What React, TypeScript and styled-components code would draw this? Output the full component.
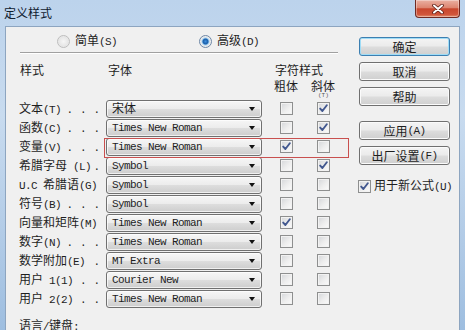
import { Fragment } from "react";
import { createGlobalStyle, styled } from "styled-components";

const GlobalStyle = createGlobalStyle`
  body {
    margin: 0;
    background: #fff;
  }
`;

// Windows 7 "定义样式" dialog: SimSun-like look, Latin in a mono face, CJK at 12px
const Window = styled.div`
  width: 465px;
  height: 330px;
  overflow: hidden;
  display: flex;
  flex-direction: column;
  background: linear-gradient(180deg, #bcd3ec 0%, #c8dbef 35%, #b3cce7 70%, #9ebee0 100%);
  font-family: "Liberation Mono", "Noto Sans CJK SC", monospace;
  font-size: 11px;
  letter-spacing: -0.6px;
  line-height: 14px;
  color: #1e1e1e;
`;

const Han = styled.span`
  font-family: "Noto Sans CJK SC", sans-serif;
  font-size: 12px;
  letter-spacing: 0;
`;

function Txt({ children }: { children: string }) {
  const parts = children.split(/([\u3400-\u9fff\uff00-\uffef]+)/);
  return (
    <>
      {parts.map((p, i) =>
        i % 2 ? <Han key={i}>{p}</Han> : <Fragment key={i}>{p}</Fragment>,
      )}
    </>
  );
}

const TitleBar = styled.div`
  flex-shrink: 0;
  height: 26px;
  display: flex;
  justify-content: space-between;
  align-items: flex-start;
  padding: 0 5px 0 4px;
`;

const Title = styled.div`
  margin-top: 6px;
  font-family: "Noto Sans CJK SC", sans-serif;
  font-size: 12px;
  letter-spacing: 0;
  line-height: 14px;
  color: #10202f;
`;

const CloseButton = styled.div`
  width: 43px;
  height: 17px;
  border: 1px solid #6f2a22;
  border-top: none;
  border-radius: 0 0 4px 4px;
  background: linear-gradient(
    180deg,
    #eab0a2 0%,
    #dd8570 45%,
    #c8462d 52%,
    #d0553a 85%,
    #e28f70 100%
  );
  box-shadow: inset 0 0 0 1px rgba(255, 255, 255, 0.35);
  display: flex;
  align-items: center;
  justify-content: center;
`;

const Body = styled.div`
  flex: 1 0 auto;
  margin: 0 5px;
  background: #f0f0f0;
  border: 1px solid #8da5c0;
  border-bottom: none;
  display: grid;
  grid-template-columns: 353px 91px;
  align-items: start;
`;

const LeftPanel = styled.div`
  padding: 6px 0 0 13px;
`;

const RadioRow = styled.div`
  height: 16px;
  display: flex;
  align-items: center;
  gap: 82px;
  padding-left: 38px;
`;

const RadioItem = styled.label`
  display: flex;
  align-items: center;
  gap: 5px;
`;

const Radio = styled.span<{ $checked?: boolean }>`
  width: 11px;
  height: 11px;
  border-radius: 50%;
  border: 1px solid ${(p) => (p.$checked ? "#6d87a6" : "#bdbdbd")};
  background: ${(p) =>
    p.$checked
      ? "radial-gradient(circle, #3c8ddc 0, #1a5ea8 2.5px, #9fd0f5 3.5px, #eaeaea 4.5px, #fafafa 100%)"
      : "radial-gradient(circle, #f6f6f6 0, #e6e6e6 60%, #f8f8f8 100%)"};
`;

const Separator = styled.div`
  margin: 3px 0 0 1px;
  width: 318px;
  height: 1px;
  background: #a0a0a0;
  border-bottom: 1px solid #fff;
`;

const Table = styled.div`
  position: relative;
  margin-top: 8px;
  display: grid;
  grid-template-columns: 87px 168px 37px 37px;
  grid-template-rows: 17px 20px;
  grid-auto-rows: 19px;
  align-items: center;
`;

const HeadCell = styled.div<{ $span?: number; $pad?: number }>`
  grid-column: span ${(p) => p.$span ?? 1};
  padding-left: ${(p) => p.$pad ?? 1}px;
  align-self: center;
`;

const SubHead = styled.div`
  align-self: start;
  display: flex;
  flex-direction: column;
  align-items: flex-start;
  line-height: 14px;
`;

const Tiny = styled.span`
  font-size: 6px;
  letter-spacing: 0;
  line-height: 5px;
  margin-left: 7px;
  color: #555;
`;

const LabelCell = styled.div`
  display: flex;
  align-items: baseline;
  justify-content: space-between;
  padding-right: 6px;
  white-space: pre;
`;

const Dots = styled.span`
  letter-spacing: 0.15px;
  margin-right: -0.15px;
`;

const Combo = styled.div`
  width: 156px;
  height: 18px;
  box-sizing: border-box;
  border: 1px solid #707070;
  border-radius: 3px;
  background: linear-gradient(180deg, #f6f6f6 0%, #ececec 48%, #dddddd 52%, #cdcdcd 100%);
  box-shadow: inset 0 0 0 1px rgba(255, 255, 255, 0.7);
  display: flex;
  align-items: center;
  justify-content: space-between;
  padding: 0 6px 0 5px;
  white-space: pre;
`;

const Arrow = styled.span`
  width: 0;
  height: 0;
  border-left: 3.5px solid transparent;
  border-right: 3.5px solid transparent;
  border-top: 4px solid #111;
  margin-top: 1px;
`;

const Box = styled.span`
  flex-shrink: 0;
  width: 13px;
  height: 13px;
  box-sizing: border-box;
  border: 1px solid #8e8f8f;
  background: linear-gradient(135deg, #d4d6d9 0%, #eeeeee 55%, #fbfbfb 100%);
  box-shadow: inset 0 0 0 1px #f2f2f2;
  display: inline-flex;
  align-items: center;
  justify-content: center;
`;

const CheckCell = styled.div`
  margin-left: 6px;
  display: flex;
`;

const Highlight = styled.div`
  position: absolute;
  left: 85px;
  top: 76px;
  width: 243px;
  height: 18px;
  border: 1px solid #c9504f;
  pointer-events: none;
`;

const Footer = styled.div`
  margin-top: 10px;
`;

const RightPanel = styled.div`
  padding-top: 10px;
  display: flex;
  flex-direction: column;
  gap: 6px;
`;

const Button = styled.div<{ $default?: boolean; $spaced?: boolean }>`
  height: 19px;
  box-sizing: border-box;
  margin-top: ${(p) => (p.$spaced ? "9px" : "0")};
  border: 1px solid ${(p) => (p.$default ? "#3c7fb1" : "#707070")};
  border-radius: 3px;
  background: linear-gradient(180deg, #f4f4f4 0%, #ebebeb 48%, #dddddd 52%, #cfcfcf 100%);
  box-shadow: inset 0 0 0 1px ${(p) => (p.$default ? "#9fdcf6" : "#fbfbfb")};
  display: flex;
  align-items: center;
  justify-content: center;
  line-height: 14px;
`;

const CheckRow = styled.div`
  margin-top: 7px;
  margin-left: -1px;
  display: flex;
  align-items: center;
  gap: 3px;
  white-space: nowrap;
`;

function Check({ checked }: { checked?: boolean }) {
  return (
    <Box>
      {checked && (
        <svg width="9" height="9" viewBox="0 0 9 9">
          <path
            d="M1.2 4.6 L3.4 7 L7.8 1.2"
            fill="none"
            stroke="#42588f"
            strokeWidth="1.9"
            strokeLinecap="round"
            strokeLinejoin="round"
          />
        </svg>
      )}
    </Box>
  );
}

type Row = {
  label: string;
  dots: string;
  font: string;
  bold?: boolean;
  italic?: boolean;
};

const rows: Row[] = [
  { label: "文本(T)", dots: ". . .", font: "宋体", italic: true },
  { label: "函数(C)", dots: ". . .", font: "Times New Roman", italic: true },
  { label: "变量(V)", dots: ". . .", font: "Times New Roman", bold: true },
  { label: "希腊字母 (L)", dots: ".", font: "Symbol", italic: true },
  { label: "U.C 希腊语(G)", dots: "", font: "Symbol" },
  { label: "符号(B)", dots: ". . .", font: "Symbol" },
  { label: "向量和矩阵(M)", dots: "", font: "Times New Roman", bold: true },
  { label: "数字(N)", dots: ". . .", font: "Times New Roman" },
  { label: "数学附加(E)", dots: ".", font: "MT Extra" },
  { label: "用户 1(1)", dots: ". .", font: "Courier New" },
  { label: "用户 2(2)", dots: ". .", font: "Times New Roman" },
];

export default function App() {
  return (
    <Window>
      <GlobalStyle />
      <TitleBar>
        <Title>定义样式</Title>
        <CloseButton>
          <svg width="12" height="10" viewBox="0 0 12 10">
            <path
              d="M2 1.5 L10 8.5 M10 1.5 L2 8.5"
              stroke="#5a1c14"
              strokeWidth="3.6"
              strokeLinecap="round"
            />
            <path
              d="M2 1.5 L10 8.5 M10 1.5 L2 8.5"
              stroke="#fff"
              strokeWidth="2"
              strokeLinecap="round"
            />
          </svg>
        </CloseButton>
      </TitleBar>
      <Body>
        <LeftPanel>
          <RadioRow>
            <RadioItem>
              <Radio />
              <span>
                <Txt>简单(S)</Txt>
              </span>
            </RadioItem>
            <RadioItem>
              <Radio $checked />
              <span>
                <Txt>高级(D)</Txt>
              </span>
            </RadioItem>
          </RadioRow>
          <Separator />
          <Table>
            <HeadCell>
              <Txt>样式</Txt>
            </HeadCell>
            <HeadCell $pad={2}>
              <Txt>字体</Txt>
            </HeadCell>
            <HeadCell $span={2}>
              <Txt>字符样式</Txt>
            </HeadCell>
            <div />
            <div />
            <SubHead>
              <Txt>粗体</Txt>
            </SubHead>
            <SubHead>
              <Txt>斜体</Txt>
              <Tiny>(T)</Tiny>
            </SubHead>
            {rows.map((r) => (
              <Fragment key={r.label}>
                <LabelCell>
                  <span>
                    <Txt>{r.label}</Txt>
                  </span>
                  <Dots>{r.dots}</Dots>
                </LabelCell>
                <div>
                  <Combo>
                    <span>
                      <Txt>{r.font}</Txt>
                    </span>
                    <Arrow />
                  </Combo>
                </div>
                <CheckCell>
                  <Check checked={r.bold} />
                </CheckCell>
                <CheckCell>
                  <Check checked={r.italic} />
                </CheckCell>
              </Fragment>
            ))}
            <Highlight />
          </Table>
          <Footer>
            <Txt>语言/键盘:</Txt>
          </Footer>
        </LeftPanel>
        <RightPanel>
          <Button $default>
            <Txt>确定</Txt>
          </Button>
          <Button>
            <Txt>取消</Txt>
          </Button>
          <Button>
            <Txt>帮助</Txt>
          </Button>
          <Button $spaced>
            <Txt>应用(A)</Txt>
          </Button>
          <Button>
            <Txt>出厂设置(F)</Txt>
          </Button>
          <CheckRow>
            <Check checked />
            <span>
              <Txt>用于新公式(U)</Txt>
            </span>
          </CheckRow>
        </RightPanel>
      </Body>
    </Window>
  );
}
